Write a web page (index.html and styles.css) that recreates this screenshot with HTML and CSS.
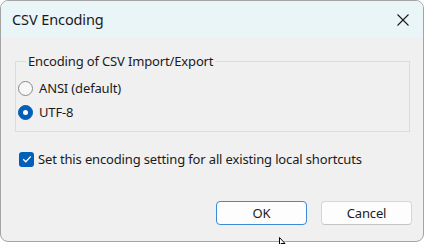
FILE: index.html
```html
<!DOCTYPE html>
<html>
<head>
<meta charset="utf-8">
<link rel="stylesheet" href="styles.css">
</head>
<body>
<div class="window">
  <div class="titlebar">
    <span class="title">CSV Encoding</span>
    <svg class="close" width="12" height="12" viewBox="0 0 12 12"><path d="M0.5 0.5 L11.5 11.5 M11.5 0.5 L0.5 11.5" stroke="#1a1a1a" stroke-width="1.1" fill="none"/></svg>
  </div>
  <div class="content">
    <fieldset class="group">
      <legend>Encoding of CSV Import/Export</legend>
      <div class="row">
        <span class="radio"></span>
        <span class="label">ANSI (default)</span>
      </div>
      <div class="row">
        <span class="radio checked"></span>
        <span class="label">UTF-8</span>
      </div>
    </fieldset>
    <div class="row check-row">
      <span class="checkbox"><svg width="14" height="14" viewBox="0 0 14 14"><path d="M3.2 7.2 L5.8 9.8 L10.8 4.4" stroke="#fff" stroke-width="1.3" fill="none"/></svg></span>
      <span class="label">Set this encoding setting for all existing local shortcuts</span>
    </div>
    <div class="buttons">
      <button class="btn default">OK</button>
      <button class="btn">Cancel</button>
    </div>
  </div>
</div>
<svg class="cursor" width="8" height="8" viewBox="0 0 8 8"><path d="M0.5 0.5 L0.5 8 L2 6.5 L6 6.5 Z" fill="#fff" stroke="#000" stroke-width="1"/></svg>
</body>
</html>
```
FILE: styles.css
```css
html, body {
  margin: 0;
  padding: 0;
  background: #ffffff;
}
body {
  font-family: "Noto Sans", "Open Sans", sans-serif;
  font-size: 13px;
  color: #1b1b1b;
  width: 425px;
  height: 244px;
  overflow: hidden;
  position: relative;
}
.window {
  width: 422px;
  height: 240px;
  border: 1px solid #a4a4a4;
  border-radius: 8px;
  background: #f0f0f0;
  overflow: hidden;
  display: flex;
  flex-direction: column;
}
.titlebar {
  height: 37px;
  background: #eaf5f8;
  display: flex;
  align-items: center;
  justify-content: space-between;
  padding: 0 13px 0 11px;
  flex-shrink: 0;
}
.title {
  font-size: 14.5px;
  color: #1a1a1a;
  letter-spacing: -0.1px;
  margin-top: -1px;
}
.close {
  display: block;
  margin-right: 1px;
}
.content {
  padding: 15px 11px 0 14px;
  display: flex;
  flex-direction: column;
}
.group {
  margin: 0;
  padding: 0 0 7px 2px;
  border: 1px solid #dcdcdc;
  width: 395px;
  box-sizing: border-box;
  min-width: 0;
}
.group legend {
  margin-left: 8px;
  padding: 0 2px;
  line-height: 16px;
  letter-spacing: -0.15px;
}
.row {
  display: flex;
  align-items: center;
  height: 24px;
  letter-spacing: -0.15px;
}
.group .row:first-of-type {
  margin-top: 7px;
}
.radio {
  width: 13px;
  height: 13px;
  border: 1px solid #8a8a8a;
  border-radius: 50%;
  background: #f7f7f7;
  box-sizing: content-box;
  margin-right: 6px;
  flex-shrink: 0;
}
.radio.checked {
  background: #005fb8;
  border-color: #005fb8;
  position: relative;
}
.radio.checked::after {
  content: "";
  position: absolute;
  left: 4px;
  top: 4px;
  width: 5px;
  height: 5px;
  border-radius: 50%;
  background: #fff;
}
.check-row {
  margin-top: 15px;
  padding-left: 4px;
}
.checkbox {
  width: 15px;
  height: 15px;
  border-radius: 3px;
  background: #005fb8;
  display: flex;
  align-items: center;
  justify-content: center;
  margin-right: 4px;
  flex-shrink: 0;
}
.checkbox svg {
  display: block;
}
.buttons {
  display: flex;
  justify-content: flex-end;
  gap: 14px;
  margin-top: 30px;
  padding-right: 0;
}
.btn {
  width: 91px;
  height: 24px;
  font-family: inherit;
  font-size: 13px;
  color: #1b1b1b;
  background: #fdfdfd;
  border: 1px solid #d6d6d6;
  border-bottom-color: #c4c4c4;
  border-radius: 4px;
  padding: 0;
  letter-spacing: -0.15px;
}
.btn.default {
  border: 1px solid #3d8ad6;
}
.cursor {
  position: absolute;
  left: 279px;
  top: 237px;
}
```
